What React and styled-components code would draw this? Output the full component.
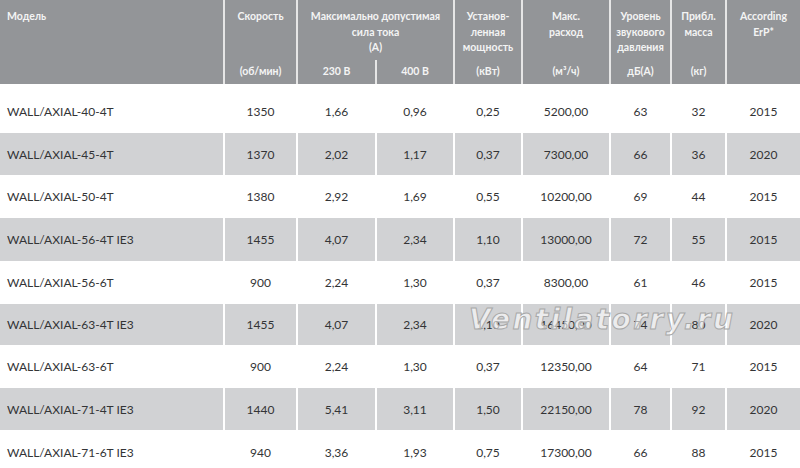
import React from "react"
import styled, { createGlobalStyle } from "styled-components"

const COLS = "223px 73px 79px 78px 68px 88px 61px 55px 75px"

const rows = [
    ["WALL/AXIAL-40-4T", "1350", "1,66", "0,96", "0,25", "5200,00", "63", "32", "2015"],
    ["WALL/AXIAL-45-4T", "1370", "2,02", "1,17", "0,37", "7300,00", "66", "36", "2020"],
    ["WALL/AXIAL-50-4T", "1380", "2,92", "1,69", "0,55", "10200,00", "69", "44", "2015"],
    ["WALL/AXIAL-56-4T IE3", "1455", "4,07", "2,34", "1,10", "13000,00", "72", "55", "2015"],
    ["WALL/AXIAL-56-6T", "900", "2,24", "1,30", "0,37", "8300,00", "61", "46", "2015"],
    ["WALL/AXIAL-63-4T IE3", "1455", "4,07", "2,34", "1,10", "16450,00", "74", "80", "2020"],
    ["WALL/AXIAL-63-6T", "900", "2,24", "1,30", "0,37", "12350,00", "64", "71", "2015"],
    ["WALL/AXIAL-71-4T IE3", "1440", "5,41", "3,11", "1,50", "22150,00", "78", "92", "2020"],
    ["WALL/AXIAL-71-6T IE3", "940", "3,36", "1,93", "0,75", "17300,00", "66", "88", "2015"],
]

// row heights in px, first row sits a bit lower under the header
const heights = [48, 43, 42, 44, 42, 42, 42, 43, 43]

const GlobalStyle = createGlobalStyle`
    html, body {
        margin: 0;
        padding: 0;
        background: #fff;
    }
    body {
        font-family: Lato, "Open Sans", sans-serif;
    }
`

const Page = styled.div`
    position: relative;
    width: 800px;
    height: 468px;
    overflow: hidden;
    background: #fff;
`

const Header = styled.div`
    display: grid;
    grid-template-columns: ${COLS};
    grid-template-rows: 60px 24px;
    height: 84px;
    background: #939598;
    color: #f4f4f4;
    font-size: 10.5px;
    font-weight: 700;
    line-height: 15.5px;
    border-bottom: 1px solid #fff;
`

const HeadCell = styled.div`
    grid-column: ${(p) => p.$col} / span ${(p) => p.$span || 1};
    grid-row: ${(p) => p.$row} / span ${(p) => p.$rows || 1};
    border-left: ${(p) => (p.$first ? "none" : "2px solid #e6e6e6")};
    padding: ${(p) => (p.$row === 1 ? "9px 2px 0" : "0 2px")};
    padding-left: ${(p) => (p.$first ? "7px" : "2px")};
    display: flex;
    flex-direction: column;
    align-items: ${(p) => (p.$first ? "flex-start" : "center")};
    justify-content: ${(p) => (p.$row === 2 ? "center" : "flex-start")};
`

const Body = styled.div`
    display: flex;
    flex-direction: column;
`

const Row = styled.div`
    display: grid;
    grid-template-columns: ${COLS};
    height: ${(p) => p.$h}px;
    padding-top: ${(p) => p.$top || 0}px;
    box-sizing: border-box;
    background-clip: content-box;
    background-color: ${(p) => (p.$shade ? "#d1d2d4" : "#fff")};
    border-bottom: 1px solid #fff;
    color: #333436;
    font-size: 12px;
`

const Cell = styled.div`
    display: flex;
    align-items: center;
    justify-content: ${(p) => (p.$first ? "flex-start" : "center")};
    padding-left: ${(p) => (p.$first ? "7px" : "0")};
    border-left: ${(p) => (p.$first ? "none" : "2px solid #fff")};
`

const Watermark = styled.div`
    position: absolute;
    left: 469px;
    top: 303px;
    font-family: "DejaVu Sans", sans-serif;
    font-style: italic;
    font-weight: 700;
    font-size: 28px;
    line-height: 34px;
    letter-spacing: 2.4px;
    color: rgba(255, 255, 255, 0.6);
    -webkit-text-stroke: 1px #a8a8a8;
    pointer-events: none;
    white-space: nowrap;
`

export default function App() {
    return (
        <Page>
            <GlobalStyle />
            <Header>
                <HeadCell $col={1} $row={1} $rows={2} $first>Модель</HeadCell>
                <HeadCell $col={2} $row={1}>Скорость</HeadCell>
                <HeadCell $col={2} $row={2}>(об/мин)</HeadCell>
                <HeadCell $col={3} $row={1} $span={2}>
                    <span>Максимально допустимая</span>
                    <span>сила тока</span>
                    <span>(А)</span>
                </HeadCell>
                <HeadCell $col={3} $row={2}>230 В</HeadCell>
                <HeadCell $col={4} $row={2}>400 В</HeadCell>
                <HeadCell $col={5} $row={1}>
                    <span>Установ-</span>
                    <span>ленная</span>
                    <span>мощность</span>
                </HeadCell>
                <HeadCell $col={5} $row={2}>(кВт)</HeadCell>
                <HeadCell $col={6} $row={1}>
                    <span>Макс.</span>
                    <span>расход</span>
                </HeadCell>
                <HeadCell $col={6} $row={2}>(м³/ч)</HeadCell>
                <HeadCell $col={7} $row={1}>
                    <span>Уровень</span>
                    <span>звукового</span>
                    <span>давления</span>
                </HeadCell>
                <HeadCell $col={7} $row={2}>дБ(А)</HeadCell>
                <HeadCell $col={8} $row={1}>
                    <span>Прибл.</span>
                    <span>масса</span>
                </HeadCell>
                <HeadCell $col={8} $row={2}>(кг)</HeadCell>
                <HeadCell $col={9} $row={1} $rows={2}>
                    <span>According</span>
                    <span>ErP*</span>
                </HeadCell>
            </Header>
            <Body>
                {rows.map((r, i) => (
                    <Row key={r[0]} $shade={i % 2 === 1} $h={heights[i]} $top={i === 0 ? 6 : 0}>
                        {r.map((v, j) => (
                            <Cell key={j} $first={j === 0}>{v}</Cell>
                        ))}
                    </Row>
                ))}
            </Body>
            <Watermark>Ventilatorry.ru</Watermark>
        </Page>
    )
}
